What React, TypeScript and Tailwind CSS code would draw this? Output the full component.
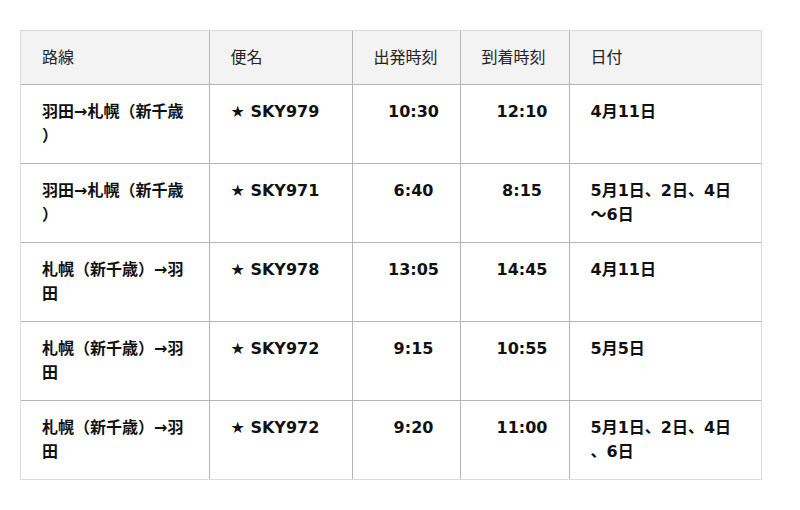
import React from "react";

interface Flight {
  route: string;
  flight: string;
  dep: string;
  arr: string;
  date: string;
}

const flights: Flight[] = [
  { route: "羽田→札幌（新千歳）", flight: "SKY979", dep: "10:30", arr: "12:10", date: "4月11日" },
  { route: "羽田→札幌（新千歳）", flight: "SKY971", dep: "6:40", arr: "8:15", date: "5月1日、2日、4日〜6日" },
  { route: "札幌（新千歳）→羽田", flight: "SKY978", dep: "13:05", arr: "14:45", date: "4月11日" },
  { route: "札幌（新千歳）→羽田", flight: "SKY972", dep: "9:15", arr: "10:55", date: "5月5日" },
  { route: "札幌（新千歳）→羽田", flight: "SKY972", dep: "9:20", arr: "11:00", date: "5月1日、2日、4日、6日" },
];

export default function App() {
  const font = { fontFamily: '"DejaVu Sans", "Noto Sans CJK JP", sans-serif' };

  return (
    <div className="min-h-[510px] bg-white pl-5 pt-[30px]" style={font}>
      <div className="w-[742px] border border-[#dcdcdc]">
        <table className="w-full table-fixed border-collapse [line-break:anywhere]">
          <colgroup>
            <col className="w-[188px]" />
            <col className="w-[143px]" />
            <col className="w-[108px]" />
            <col className="w-[109px]" />
            <col />
          </colgroup>
          <thead>
            <tr className="bg-[#f3f3f3] text-left text-base font-normal leading-[23px] text-[#222]">
              <th className="border-r border-[#b5b5b5] py-[15px] pl-[21px] pr-[21px] font-normal">路線</th>
              <th className="border-r border-[#b5b5b5] py-[15px] pl-[21px] pr-[21px] font-normal">便名</th>
              <th className="whitespace-nowrap border-r border-[#b5b5b5] py-[15px] pl-[21px] pr-0 font-normal">出発時刻</th>
              <th className="whitespace-nowrap border-r border-[#b5b5b5] py-[15px] pl-[21px] pr-0 font-normal">到着時刻</th>
              <th className="py-[15px] pl-[21px] pr-[21px] font-normal">日付</th>
            </tr>
          </thead>
          <tbody>
            {flights.map((f, i) => (
              <tr key={i} className="align-top text-base font-bold leading-6 text-[#111]">
                <td className="border-r border-t border-[#b5b5b5] py-[15px] pl-[21px] pr-[21px]">{f.route}</td>
                <td className="border-r border-t border-[#b5b5b5] py-[15px] pl-[21px] pr-[10px]">★ {f.flight}</td>
                <td className="whitespace-nowrap border-r border-t border-[#b5b5b5] py-[15px] pl-[25px] pr-[10px] text-center">{f.dep}</td>
                <td className="whitespace-nowrap border-r border-t border-[#b5b5b5] py-[15px] pl-[25px] pr-[10px] text-center">{f.arr}</td>
                <td className="border-t border-[#b5b5b5] py-[15px] pl-[21px] pr-[21px]">{f.date}</td>
              </tr>
            ))}
          </tbody>
        </table>
      </div>
    </div>
  );
}
